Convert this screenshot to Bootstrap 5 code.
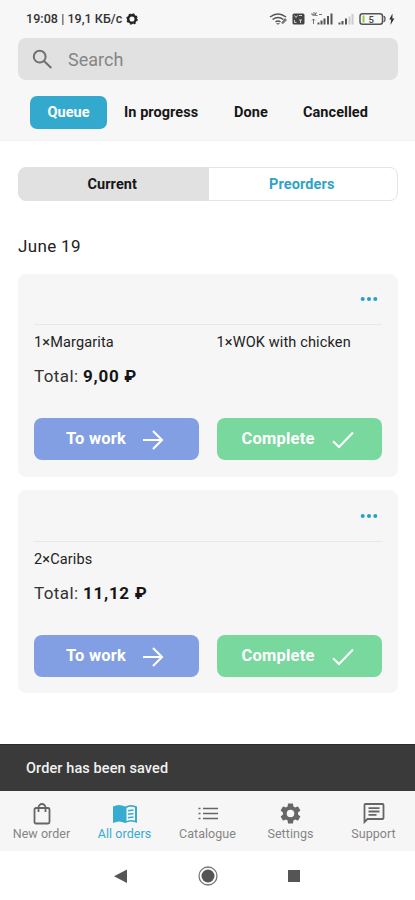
<!DOCTYPE html>
<html lang="en">
<head>
<meta charset="utf-8">
<meta name="viewport" content="width=device-width, initial-scale=1">
<title>Orders</title>
<link href="https://cdn.jsdelivr.net/npm/bootstrap@5.3.0/dist/css/bootstrap.min.css" rel="stylesheet">
<style>
body{font-family:Roboto,"Liberation Sans",sans-serif;color:#222;background:#fff;line-height:20px}
svg{display:block;flex:none}
.screen{height:900px;overflow:hidden}
.top-area{height:141px;background:#f7f7f7;border-bottom:1px solid #f1f1f1}
.status-line{height:38px;padding:0 19px 0 26px;font-size:12.5px;font-weight:500;color:#333}
.status-clock{letter-spacing:.05px}
.search-box{height:42px;margin:0 17px 0 18px;border-radius:8px;background:#e1e1e1;padding-left:14px}
.search-box input{font-size:18px;padding:0 0 0 15px;color:#777;height:40px}
.search-box input::placeholder{color:#858585;opacity:1}
.tabs-row{margin:16px 0 0 30px}
.tabs-row .nav-link{padding:0;height:33px;line-height:34px;font-size:14.5px;font-weight:700;color:#161616;letter-spacing:.06px}
.tabs-row .nav-link.active{width:77px;text-align:center;border-radius:7px;background:#33a9ce;color:#fff}
.tab-progress{margin-left:17px;width:110px}
.tab-done{width:69px}
.segments{height:34px;margin:26px 17px 0 18px}
.segments .btn{padding:1px 2px 0 0;font-size:14.5px;font-weight:700;border:1px solid #e4e4e4;border-radius:8px;background:#fff;color:#2fa3c7;letter-spacing:.1px}
.segments .btn.active{background:#e1e1e1;color:#161616;border-color:#e1e1e1}
.day{font-size:17px;line-height:24px;margin:33px 0 16px 18px;font-weight:400;letter-spacing:.35px}
.order{height:203px;margin:0 17px 13px 18px;border:0;border-radius:8px;background:#f6f6f6;padding:0 16px}
.order + .order{padding-top:1px}
.order-menu{height:51px;border-bottom:1px solid #e7e7e7;padding:0 4px 1px 0;color:#259fc5}
.items{height:36px;padding-top:8px;font-size:14.5px;letter-spacing:.14px;--bs-gutter-x:17px}
.total{font-size:17px;line-height:24px;margin-top:3px;color:#333;letter-spacing:.4px}
.total b{color:#161616;font-weight:700;letter-spacing:.7px}
.actions{gap:18px;margin-top:30px}
.actions .btn{height:42px;flex:1;border:0;border-radius:8px;padding:1px 3px 0 0;font-size:16.5px;font-weight:700;color:#fff;letter-spacing:.2px}
.btn-work{background:#829fe4}
.btn-complete{background:#78d89e}
.saved{height:47px;margin-top:38px;padding:2px 26px 0;background:#3a3a3a;color:#f1f1f1;font-size:14.5px;font-weight:500;letter-spacing:.1px;border-top:1px solid #2c2c2c}
.bottom-tabs{height:60px;background:#f6f6f6;padding-top:11px;font-size:12.5px;line-height:15px;color:#858585;letter-spacing:.05px}
.bottom-tabs a{width:83px;color:inherit;text-decoration:none;gap:1px}
.bottom-tabs svg{color:#666}
.bottom-tabs .current,.bottom-tabs .current svg{color:#37abd0}
.system-keys{height:49px;gap:64px;color:#555}
</style>
<script src="https://cdn.jsdelivr.net/npm/bootstrap@5.3.0/dist/js/bootstrap.bundle.min.js"></script>
</head>
<body>
<svg width="0" height="0" class="position-absolute" aria-hidden="true">
<symbol id="gear" viewBox="2 2 20 20"><path fill="currentColor" fill-rule="evenodd" d="M19.14 12.94c.04-.3.06-.61.06-.94s-.02-.64-.07-.94l2.03-1.58a.5.5 0 0 0 .12-.61l-1.92-3.32a.5.5 0 0 0-.59-.22l-2.39.96a7 7 0 0 0-1.62-.94l-.36-2.54a.5.5 0 0 0-.48-.41h-3.84a.5.5 0 0 0-.47.41l-.36 2.54a7 7 0 0 0-1.62.94l-2.39-.96a.5.5 0 0 0-.59.22L2.74 8.87a.5.5 0 0 0 .12.61l2.03 1.58a6 6 0 0 0 0 1.88l-2.03 1.58a.5.5 0 0 0-.12.61l1.92 3.32c.12.22.37.29.59.22l2.39-.96c.5.38 1.03.7 1.62.94l.36 2.54c.05.24.24.41.48.41h3.84c.24 0 .44-.17.47-.41l.36-2.54a7 7 0 0 0 1.62-.94l2.39.96c.22.08.47 0 .59-.22l1.92-3.32a.5.5 0 0 0-.12-.61zM12 15.6a3.6 3.6 0 1 1 0-7.2 3.6 3.6 0 0 1 0 7.2z"/></symbol>
<symbol id="dots" viewBox="0 0 18 6"><g fill="currentColor"><circle cx="2.7" cy="3" r="2"/><circle cx="9" cy="3" r="2"/><circle cx="15.3" cy="3" r="2"/></g></symbol>
<symbol id="arrow" viewBox="0 0 20 20"><path d="M0 10h18.5M10 1l9 9-9 9" fill="none" stroke="currentColor" stroke-width="2.1"/></symbol>
<symbol id="check" viewBox="0 0 22 18"><path d="M1 10.3 7 16 21 1.5" fill="none" stroke="currentColor" stroke-width="2.1"/></symbol>
</svg>
<div class="screen d-flex flex-column">
<header class="top-area">
  <div class="status-line d-flex align-items-center">
    <span class="status-clock">19:08 <span class="fw-normal">|</span> 19,1 КБ/с</span>
    <svg class="ms-1" width="12" height="12" viewBox="0 0 12 12"><circle cx="6" cy="6" r="3.8" fill="none" stroke="#222" stroke-width="2.5"/><circle cx="6" cy="6" r="5.1" fill="none" stroke="#222" stroke-width="1.3" stroke-dasharray="2 2"/></svg>
    <svg class="ms-auto" width="127" height="14" viewBox="269 12 127 14" fill="none" stroke="#555">
      <path d="M270 17q8-6 16 0M272.5 19.5q5.500-4 11 0M275.500 22q2.500-2 5 0" stroke-width="1.5"/><path d="M276 23h4l-2 2zM281 23l4-5 2 2-4 4z" fill="#777" stroke="none"/>
      <rect x="292.500" y="13.500" width="12" height="11" rx="1.500" fill="#444" stroke="none"/><path d="m294.500 15.500 1.500 2 1.500-2M299 15.500h3M294.500 20v2.500h2M299 20h3M300.500 20v3" stroke="#ddd" stroke-width=".9"/>
      <path d="M312 13v2h3M314 12v4M317 13h-1.500v2.500h2M319 14.500h3M313.500 19v5M312 20.500l1.500-1.500 1.500 1.500" stroke-width=".8"/>
      <path d="M318.500 24.500v-2M321.500 24.500v-4M324.500 24.500v-6M328 24.500v-8.500M331.500 24.500v-11" stroke-width="2"/>
      <path d="M339.500 24.500v-2M342.500 24.500v-3.500M346 24.500v-6" stroke-width="2"/><path d="M349.500 24.500v-8M352.500 24.500v-10.500" stroke="#ccc" stroke-width="2"/>
      <rect x="360" y="13.700" width="22.500" height="10.600" rx="2.500" stroke-width="1.500"/><path d="M383.500 16.500q1.500 0 1.500 2.500t-1.500 2.500" stroke-width="1.300"/><path d="M363.500 15.500v7" stroke="#91cf4d" stroke-width="2"/>
      <text x="368.500" y="22.500" font-size="9.500" font-weight="500" fill="#444" stroke="none">5</text>
      <path d="M392.500 13.500l-3.300 6h2l-.8 5.500 4-6.500h-2z" fill="#333" stroke="none"/>
    </svg>
  </div>
  <div class="search-box d-flex align-items-center">
    <svg width="21" height="21" viewBox="0 0 21 21" fill="none" stroke="#707070" stroke-width="2"><circle cx="7.700" cy="7.700" r="5.900"/><path d="m12 12 7.300 7"/></svg>
    <input class="form-control border-0 bg-transparent shadow-none" placeholder="Search" aria-label="Search">
  </div>
  <nav class="nav tabs-row flex-nowrap">
    <a class="nav-link active" href="#">Queue</a><a class="nav-link tab-progress" href="#">In progress</a><a class="nav-link tab-done" href="#">Done</a><a class="nav-link" href="#">Cancelled</a>
  </nav>
</header>
<main>
  <div class="btn-group segments d-flex" role="group">
    <button class="btn active w-50">Current</button><button class="btn w-50">Preorders</button>
  </div>
  <h2 class="day">June 19</h2>
  <article class="card order">
    <div class="order-menu d-flex align-items-center justify-content-end"><svg width="18" height="6"><use href="#dots"/></svg></div>
    <div class="row items"><div class="col-6">1×Margarita</div><div class="col-6">1×WOK with chicken</div></div>
    <div class="total">Total: <b>9,00 ₽</b></div>
    <div class="actions d-flex">
      <button class="btn btn-work d-flex align-items-center justify-content-center"><span>To work</span><svg class="ms-3" width="22" height="20"><use href="#arrow"/></svg></button>
      <button class="btn btn-complete d-flex align-items-center justify-content-center"><span>Complete</span><svg class="ms-3" width="24" height="18"><use href="#check"/></svg></button>
    </div>
  </article>
  <article class="card order">
    <div class="order-menu d-flex align-items-center justify-content-end"><svg width="18" height="6"><use href="#dots"/></svg></div>
    <div class="row items"><div class="col-6">2×Caribs</div></div>
    <div class="total">Total: <b>11,12 ₽</b></div>
    <div class="actions d-flex">
      <button class="btn btn-work d-flex align-items-center justify-content-center"><span>To work</span><svg class="ms-3" width="22" height="20"><use href="#arrow"/></svg></button>
      <button class="btn btn-complete d-flex align-items-center justify-content-center"><span>Complete</span><svg class="ms-3" width="24" height="18"><use href="#check"/></svg></button>
    </div>
  </article>
</main>
<div class="saved d-flex align-items-center" role="status">Order has been saved</div>
<nav class="bottom-tabs d-flex">
  <a href="#" class="d-flex flex-column align-items-center"><svg width="24" height="23" viewBox="0 0 24 23" fill="none" stroke="currentColor" stroke-width="1.800"><rect x="4.500" y="6" width="15" height="15.500" rx="1.500"/><path d="M8.500 10V5.500a3.500 3.500 0 0 1 7 0V10"/></svg><span>New order</span></a>
  <a href="#" class="current d-flex flex-column align-items-center"><svg width="26" height="23" viewBox="0 0 26 23"><path d="M1 4.500Q7 1.500 13 4.500q6-3 12 0V21q-6-3-12 0-6-3-12 0z" fill="currentColor"/><path d="M14.500 6q4-2 8.500-.5v13q-4.500-1-8.500.5z" fill="#f6f6f6"/><path d="M16 8.800q2.800-1 5.500-.5M16 12.300q2.800-1 5.500-.5M16 15.800q2.800-1 5.500-.5" fill="none" stroke="currentColor" stroke-width="1.500"/></svg><span>All orders</span></a>
  <a href="#" class="d-flex flex-column align-items-center"><svg width="22" height="23" viewBox="0 0 22 23" fill="none" stroke="currentColor" stroke-width="1.700"><path d="M6 6.500h15M6 11.500h15M6 16.500h15M1.500 6.500h2M1.500 11.500h2M1.500 16.500h2"/></svg><span>Catalogue</span></a>
  <a href="#" class="d-flex flex-column align-items-center"><svg width="21" height="23"><use href="#gear"/></svg><span>Settings</span></a>
  <a href="#" class="d-flex flex-column align-items-center"><svg width="22" height="23" viewBox="0 0 22 23" fill="none" stroke="currentColor" stroke-width="1.800"><path d="M1.500 20V3q0-1 1-1h17q1 0 1 1v13q0 1-1 1h-15z"/><path d="M5.500 6.200h11M5.500 9.500h11M5.500 12.800h8"/></svg><span>Support</span></a>
</nav>
<footer class="system-keys d-flex align-items-center justify-content-center">
  <svg width="22" height="22" viewBox="0 0 22 22"><path d="M16 4.500v13.500L3 11.200z" fill="currentColor"/></svg>
  <svg width="22" height="22" viewBox="0 0 22 22"><circle cx="11" cy="11" r="9" fill="none" stroke="#777" stroke-width="1.300"/><circle cx="11" cy="11" r="6.500" fill="currentColor"/></svg>
  <svg width="22" height="22" viewBox="0 0 22 22"><path d="M5 5h12v12H5z" fill="currentColor"/></svg>
</footer>
</div>
</body>
</html>
